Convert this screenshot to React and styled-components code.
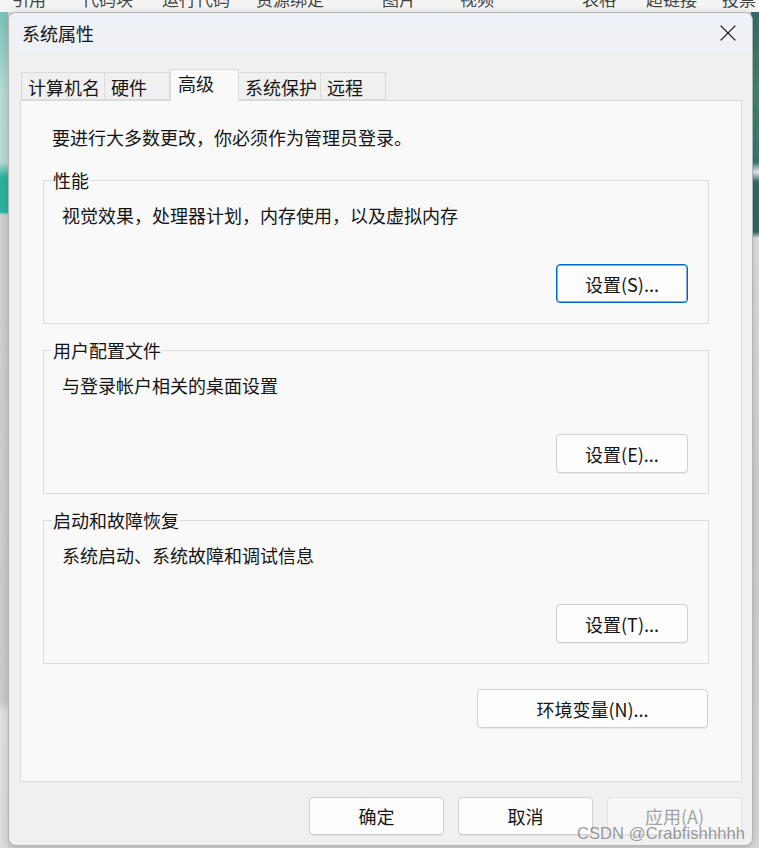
import React from "react";
import styled, { createGlobalStyle } from "styled-components";

const GlobalStyle = createGlobalStyle`
    html, body {
        margin: 0;
        padding: 0;
        background: #d6d6d6;
    }
    * {
        box-sizing: border-box;
    }
`;

const FONT = `"Noto Sans CJK SC", "Microsoft YaHei UI", "Noto Sans", sans-serif`;

// 背后的桌面（被对话框挡住，只露出边缘）
const Desktop = styled.div`
    position: relative;
    width: 759px;
    height: 848px;
    overflow: hidden;
    background: #d4d4d4;
    font-family: ${FONT};
`;

const EditorToolbar = styled.div`
    display: flex;
    height: 12px;
    background: #f4f4f4;
    overflow: hidden;
`;

const ToolbarItem = styled.span`
    flex: none;
    width: ${(props) => props.w}px;
    padding-left: ${(props) => props.pad}px;
    margin-top: -12px;
    font-size: 17px;
    line-height: 22px;
    color: #444;
    white-space: nowrap;
`;

const SideStrips = styled.div`
    display: flex;
    justify-content: space-between;
    height: 836px;
`;

const Strip = styled.div`
    width: 8px;
    height: 100%;
    background: ${(props) => props.bg};
`;

const Window = styled.div`
    position: absolute;
    left: 8px;
    top: 12px;
    width: 745px;
    height: 834px;
    display: flex;
    flex-direction: column;
    background: #f0f0f0;
    border: 1px solid #b4b4b4;
    border-radius: 8px;
    overflow: hidden;
    box-shadow: 0 2px 10px rgba(0, 0, 0, 0.18);
    color: #141414;
    font-size: 18px;
`;

const TitleBar = styled.div`
    display: flex;
    align-items: center;
    justify-content: space-between;
    height: 40px;
    padding: 0 15px 0 13px;
    background: linear-gradient(#eef1f8, #eff1f6);
`;

const Title = styled.span`
    line-height: 24px;
`;

const CloseButton = styled.button`
    display: flex;
    align-items: center;
    justify-content: center;
    width: 18px;
    height: 18px;
    padding: 0;
    border: none;
    background: none;
    cursor: pointer;
`;

const Body = styled.div`
    flex: 1;
    display: flex;
    flex-direction: column;
    padding: 16px 10px 0 11px;
`;

const TabStrip = styled.div`
    display: flex;
    align-items: flex-end;
    height: 31px;
    padding-left: 1px;
    position: relative;
    z-index: 1;
`;

const Tab = styled.div`
    width: ${(props) => props.w}px;
    height: ${(props) => (props.active ? 32 : 28)}px;
    margin-bottom: ${(props) => (props.active ? -1 : 0)}px;
    padding: ${(props) => (props.active ? "1px 0 0 7px" : "2px 0 0 6px")};
    background: ${(props) => (props.active ? "#f9f9f9" : "#f0f0f0")};
    border: 1px solid #dadada;
    border-bottom: ${(props) => (props.active ? "none" : "1px solid #dadada")};
    border-left: ${(props) => (props.first || props.active ? "1px solid #dadada" : "none")};
    line-height: 24px;
    white-space: nowrap;
`;

const Panel = styled.div`
    width: 722px;
    height: 682px;
    display: flex;
    flex-direction: column;
    padding: 24px 32px 0 22px;
    background: #f9f9f9;
    border: 1px solid #dadada;
`;

const Intro = styled.p`
    margin: 0 0 19px 9px;
    line-height: 24px;
`;

const GroupBox = styled.fieldset`
    margin: 0 0 14px;
    padding: 0 20px 20px 18px;
    min-width: 0;
    border: 1px solid #dcdcdc;
    display: flex;
    flex-direction: column;
`;

const Legend = styled.legend`
    margin-left: -10px;
    padding: 0 1px;
    line-height: 24px;
`;

const GroupText = styled.div`
    margin-top: 11px;
    line-height: 24px;
`;

const Button = styled.button`
    flex: none;
    width: ${(props) => props.w}px;
    height: ${(props) => props.h || 39}px;
    padding: 0;
    border-radius: 4px;
    border: 1px solid ${(props) => (props.focused ? "#0067c0" : "#d0d0d0")};
    box-shadow: ${(props) =>
        props.focused ? "inset 0 0 0 0.5px #0067c0" : "0 1px 0 rgba(0, 0, 0, 0.06)"};
    background: ${(props) => (props.disabled ? "#f7f7f7" : "#fdfdfd")};
    color: ${(props) => (props.disabled ? "#a2a2a2" : "#141414")};
    border-color: ${(props) => (props.disabled ? "#e2e2e2" : undefined)};
    font-family: ${FONT};
    font-size: 18px;
    line-height: 24px;
    cursor: default;
`;

const GroupButton = styled(Button)`
    align-self: flex-end;
    margin-top: 37px;
`;

const EnvRow = styled.div`
    display: flex;
    justify-content: flex-end;
    margin-top: 11px;
    padding-right: 1px;
`;

const Footer = styled.div`
    display: flex;
    justify-content: flex-end;
    gap: 14px;
    margin-top: 15px;
`;

const Watermark = styled.span`
    position: absolute;
    right: 14px;
    bottom: 5px;
    font-family: "Liberation Sans", Arial, sans-serif;
    font-size: 16.5px;
    color: rgba(120, 120, 120, 0.75);
    pointer-events: none;
    letter-spacing: 0.1px;
`;

const toolbarItems = [
    { text: "引用", w: 72, pad: 12 },
    { text: "代码块", w: 86, pad: 10 },
    { text: "运行代码", w: 96, pad: 4 },
    { text: "资源绑定", w: 126, pad: 2 },
    { text: "图片", w: 78, pad: 2 },
    { text: "视频", w: 120, pad: 2 },
    { text: "表格", w: 64, pad: 4 },
    { text: "超链接", w: 76, pad: 4 },
    { text: "投票", w: 60, pad: 4 },
];

const tabs = [
    { label: "计算机名", w: 84, first: true },
    { label: "硬件", w: 65 },
    { label: "高级", w: 69, active: true },
    { label: "系统保护", w: 82 },
    { label: "远程", w: 65 },
];

const groups = [
    { title: "性能", text: "视觉效果，处理器计划，内存使用，以及虚拟内存", button: "设置(S)...", focused: true },
    { title: "用户配置文件", text: "与登录帐户相关的桌面设置", button: "设置(E)..." },
    { title: "启动和故障恢复", text: "系统启动、系统故障和调试信息", button: "设置(T)..." },
];

function CloseIcon() {
    return (
        <svg width="16" height="16" viewBox="0 0 16 16">
            <path d="M0.6 0.6 L15.4 15.4 M15.4 0.6 L0.6 15.4" stroke="#1b1b1b" strokeWidth="1.3" />
        </svg>
    );
}

export default function App() {
    return (
        <>
            <GlobalStyle />
            <Desktop>
                <EditorToolbar>
                    {toolbarItems.map((item) => (
                        <ToolbarItem key={item.text} w={item.w} pad={item.pad}>
                            {item.text}
                        </ToolbarItem>
                    ))}
                </EditorToolbar>
                <SideStrips>
                    <Strip bg="linear-gradient(#7cc3b6 0px, #b6ddd6 80px, #b9dcd6 150px, #2bb4a0 165px, #2bb4a0 200px, #d0d0d0 203px, #cdcdcd 690px, #e2e2e2 700px, #dcdcdc 836px)" />
                    <Strip bg="linear-gradient(#2f6f6c 0px, #3a8a6e 80px, #2e7a74 150px, #e8eef6 160px, #2b6d6b 170px, #286a66 220px, #dedede 226px, #cfcfcf 500px, #d8d8d8 836px)" />
                </SideStrips>

                <Window>
                    <TitleBar>
                        <Title>系统属性</Title>
                        <CloseButton aria-label="关闭">
                            <CloseIcon />
                        </CloseButton>
                    </TitleBar>
                    <Body>
                        <TabStrip>
                            {tabs.map((tab) => (
                                <Tab key={tab.label} w={tab.w} active={tab.active} first={tab.first}>
                                    {tab.label}
                                </Tab>
                            ))}
                        </TabStrip>
                        <Panel>
                            <Intro>要进行大多数更改，你必须作为管理员登录。</Intro>
                            {groups.map((g) => (
                                <GroupBox key={g.title}>
                                    <Legend>{g.title}</Legend>
                                    <GroupText>{g.text}</GroupText>
                                    <GroupButton w={132} focused={g.focused}>
                                        {g.button}
                                    </GroupButton>
                                </GroupBox>
                            ))}
                            <EnvRow>
                                <Button w={231}>环境变量(N)...</Button>
                            </EnvRow>
                        </Panel>
                        <Footer>
                            <Button w={135} h={38}>确定</Button>
                            <Button w={135} h={38}>取消</Button>
                            <Button w={135} h={38} disabled>应用(A)</Button>
                        </Footer>
                    </Body>
                </Window>
                <Watermark>CSDN @Crabfishhhhh</Watermark>
            </Desktop>
        </>
    );
}
